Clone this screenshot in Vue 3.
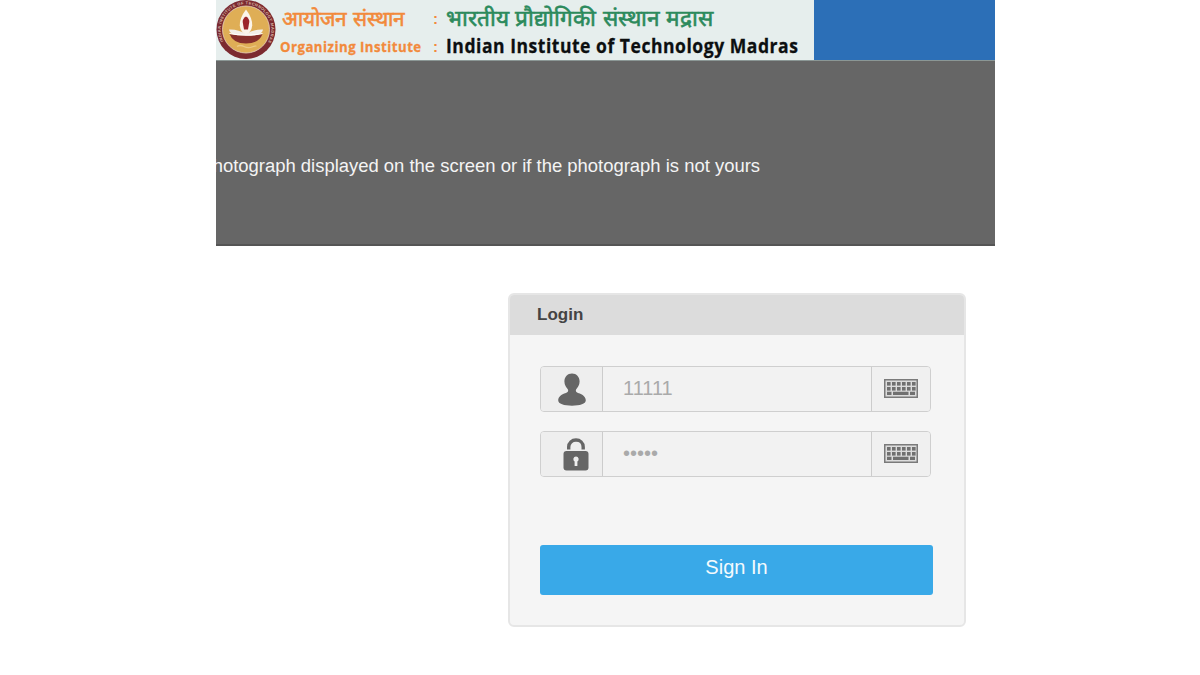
<script setup>
import { ref } from 'vue';

const username = ref('11111');
const password = ref('11111');

// key positions inside the 34x19 keyboard icon
const keyColumns = [3, 8, 13, 18, 23, 28];
const keyRows = [3, 8];
</script>

<template>
    <div class="page">
        <header class="banner">
            <div class="institute">
                <svg class="emblem" viewBox="0 0 60 60">
                    <defs>
                        <path id="ring-top" d="M 8.500 43 A 25.300 25.300 0 1 1 51.500 43" />
                    </defs>
                    <circle cx="30" cy="29.5" r="29.5" fill="#7c2a30" />
                    <circle cx="30" cy="29.5" r="23.5" fill="#dfae56" stroke="#e9d3bd" stroke-width="0.8" />
                    <text class="ring-text">
                        <textPath href="#ring-top" startOffset="2" textLength="104">INDIAN INSTITUTE OF TECHNOLOGY MADRAS</textPath>
                    </text>
                    <path d="M13 29.500 Q22 29 30 34 Q38 29 47 29.500 Q46.500 33 41 35.500 H19 Q13.500 33 13 29.500 Z" fill="#f3efe9" />
                    <path d="M30 9.500 Q23.500 18 23.800 25.500 Q24.500 32 30 35 Q35.500 32 36.200 25.500 Q36.500 18 30 9.500 Z" fill="#fbf4ea" />
                    <path d="M30 16.500 Q26.500 18.500 26.700 22 L28 29.500 H32 L33.300 22 Q33.500 18.500 30 16.500 Z" fill="#9c252b" />
                    <path d="M13.500 34 Q30 37 46.500 34 Q43 43.500 30 43.500 Q17 43.500 13.500 34 Z" fill="#87302c" />
                    <path d="M13.500 33.500 Q30 37 46.500 33.500" fill="none" stroke="#fff" stroke-width="1.200" />
                    <path d="M21 46.500 Q24 44.500 28 46.500 T36 47 T40 46.500" fill="none" stroke="#ecc985" stroke-width="1.300" />
                </svg>
                <div class="labels">
                    <span class="label-hi">आयोजन संस्थान</span>
                    <span class="label-en">Organizing Institute</span>
                </div>
                <div class="colons">
                    <span>:</span>
                    <span>:</span>
                </div>
                <div class="names">
                    <span class="name-hi">भारतीय प्रौद्योगिकी संस्थान मद्रास</span>
                    <span class="name-en">Indian Institute of Technology Madras</span>
                </div>
            </div>
        </header>

        <div class="notice">
            <div class="notice-text">photograph displayed on the screen or if the photograph is not yours</div>
        </div>

        <form class="login" @submit.prevent>
            <div class="login-title">Login</div>
            <div class="login-body">
                <div class="field">
                    <span class="addon">
                        <svg class="user-icon" width="28" height="33" viewBox="0 0 28 33">
                            <path d="M14 0.500 C18.500 0.500 21.600 3.800 21.600 8.500 C21.600 12 19.700 14.500 18.200 16.300 C17.300 18.200 18 19.400 20 19.900 C25 21.200 27.800 24 27.800 27.300 C27.800 31 22 32.700 14 32.700 C6 32.700 0.200 31 0.200 27.300 C0.200 24 3 21.200 8 19.900 C10 19.400 10.700 18.200 9.800 16.300 C8.300 14.500 6.400 12 6.400 8.500 C6.400 3.800 9.500 0.500 14 0.500 Z" />
                        </svg>
                    </span>
                    <input v-model="username" type="text" />
                    <span class="keyboard">
                        <svg width="34" height="19" viewBox="0 0 34 19">
                            <rect x="0.750" y="0.750" width="32.500" height="17.500" fill="#dcdcdc" stroke="#7a7a7a" stroke-width="1.500" />
                            <template v-for="y in keyRows" :key="y">
                                <rect v-for="x in keyColumns" :key="x" :x="x" :y="y" width="3.600" height="3.600" />
                            </template>
                            <path d="M3 12.800h4.500v3.200H3zM9 12.800h15.500v3.200H9zM26 12.800h5v3.200h-5z" />
                        </svg>
                    </span>
                </div>
                <div class="field">
                    <span class="addon">
                        <svg class="lock-icon" width="26" height="33" viewBox="0 0 26 33">
                            <path class="shackle" d="M5.700 11.500 V9 C5.700 4.800 9 2 13 2 C17 2 20.200 4.800 20.200 9 V11.500" />
                            <rect x="0.500" y="13" width="25" height="19.500" rx="3" />
                            <path class="keyhole" d="M13 18.500 a2.700 2.700 0 0 1 1.400 5 V28 H11.600 V23.500 A2.700 2.700 0 0 1 13 18.500 Z" />
                        </svg>
                    </span>
                    <input v-model="password" type="password" />
                    <span class="keyboard">
                        <svg width="34" height="19" viewBox="0 0 34 19">
                            <rect x="0.750" y="0.750" width="32.500" height="17.500" fill="#dcdcdc" stroke="#7a7a7a" stroke-width="1.500" />
                            <template v-for="y in keyRows" :key="y">
                                <rect v-for="x in keyColumns" :key="x" :x="x" :y="y" width="3.600" height="3.600" />
                            </template>
                            <path d="M3 12.800h4.500v3.200H3zM9 12.800h15.500v3.200H9zM26 12.800h5v3.200h-5z" />
                        </svg>
                    </span>
                </div>
                <button class="sign-in" type="submit">Sign In</button>
            </div>
        </form>
    </div>
</template>

<style>
body {
    margin: 0;
    background: #fff;
}
</style>

<style scoped>
.page {
    box-sizing: border-box;
    width: 1200px;
    height: 675px;
    padding: 0 205px 0 216px;
    overflow: hidden;
    font-family: "Liberation Sans", Arial, sans-serif;
}

.banner {
    height: 60px;
    background: #2c6fb7;
}

.institute {
    display: flex;
    width: 598px;
    height: 60px;
    background: #e6eeed;
    white-space: nowrap;
}

.emblem {
    flex: none;
    width: 60px;
    height: 60px;
}

.ring-text {
    fill: #d9b9a8;
    font-size: 4px;
    font-weight: bold;
}

.labels,
.colons,
.names {
    display: flex;
    flex-direction: column;
    align-items: flex-start;
    padding-top: 5px;
    font-weight: bold;
}

.labels span,
.colons span,
.names span {
    height: 28px;
    line-height: 28px;
    transform-origin: left center;
}

.labels {
    width: 153px;
    margin-left: 4px;
    color: #f28a3c;
}

.labels .label-hi {
    padding-left: 2px;
    font-size: 20.800px;
    font-weight: 500;
    -webkit-text-stroke: 0.6px #f28a3c;
}

.labels .label-en {
    line-height: 27px;
    font-family: "Open Sans", sans-serif;
    font-size: 15px;
    letter-spacing: 0.550px;
    transform: scaleX(0.88);
    -webkit-text-stroke: 0.3px #f28a3c;
}

.colons {
    width: 13px;
    color: #f28a3c;
    font-size: 15px;
}

.names {
    width: 360px;
}

.names .name-hi {
    color: #2c8a5c;
    font-size: 22.600px;
    font-weight: 500;
    -webkit-text-stroke: 0.6px #2c8a5c;
}

.names .name-en {
    line-height: 26px;
    color: #0c0f10;
    font-family: "Open Sans", sans-serif;
    font-size: 19.800px;
    letter-spacing: 0.600px;
    transform: scaleX(0.886);
    -webkit-text-stroke: 0.3px #0c0f10;
}

.notice {
    box-sizing: border-box;
    height: 186px;
    padding-top: 94px;
    background: #666;
    border-top: 1px solid #8b9795;
    border-bottom: 2px solid #555;
    overflow: hidden;
}

.notice-text {
    display: flex;
    justify-content: flex-end;
    width: 544px;
    color: #f4f4f4;
    font-size: 18.45px;
    line-height: 22px;
    white-space: nowrap;
}

.login {
    box-sizing: border-box;
    width: 458px;
    height: 334px;
    margin: 47px 0 0 292px;
    background: #f5f5f5;
    border: 2px solid #e6e6e6;
    border-radius: 6px;
    overflow: hidden;
}

.login-title {
    height: 40px;
    padding-left: 27px;
    background: #dcdcdc;
    color: #444;
    font-size: 17px;
    font-weight: bold;
    line-height: 40px;
}

.login-body {
    display: flex;
    flex-direction: column;
    padding: 31px 30px 0;
}

.field {
    box-sizing: border-box;
    display: flex;
    width: 391px;
    height: 46px;
    margin-bottom: 19px;
    background: #f2f2f2;
    border: 1.500px solid #cfcfcf;
    border-radius: 4px;
    overflow: hidden;
}

.addon {
    box-sizing: border-box;
    flex: none;
    width: 62px;
    background: #eee;
    border-right: 1px solid #ccc;
}

.addon svg {
    display: block;
    fill: #666;
}

.user-icon {
    margin: 6px 0 0 17px;
}

.lock-icon {
    margin: 6px 0 0 22px;
}

.shackle {
    fill: none;
    stroke: #666;
    stroke-width: 3.400;
}

.keyhole {
    fill: #eee;
}

.field input {
    flex: 1;
    min-width: 0;
    padding: 0 0 1px 20px;
    background: transparent;
    border: 0;
    outline: 0;
    color: #aaa;
    font-family: "Liberation Sans", Arial, sans-serif;
    font-size: 20px;
}

.keyboard {
    box-sizing: border-box;
    display: flex;
    flex: none;
    align-items: center;
    justify-content: center;
    width: 59px;
    padding-bottom: 1px;
    background: #f0f0f0;
    border-left: 1px solid #ccc;
}

.keyboard svg {
    fill: #707070;
}

.sign-in {
    width: 393px;
    height: 50px;
    margin-top: 49px;
    padding: 0 0 6px;
    background: #39a9e8;
    border: 0;
    border-radius: 3px;
    color: #f4fafd;
    font-family: "Liberation Sans", Arial, sans-serif;
    font-size: 20px;
}
</style>
